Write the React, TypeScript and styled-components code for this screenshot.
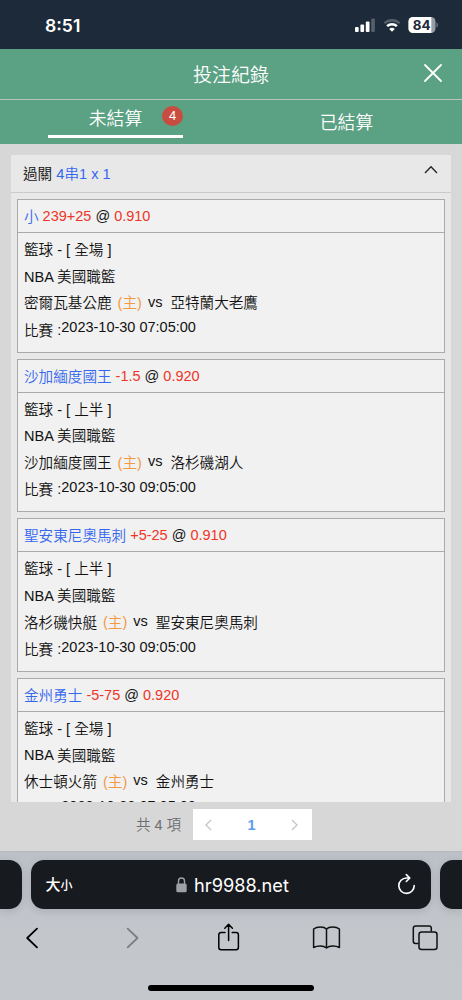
import React from 'react';
import styled, { createGlobalStyle } from 'styled-components';

const GlobalStyle = createGlobalStyle`
  * { box-sizing: border-box; }
  body { margin: 0; background: #d7d7d7; }
`;

const blue = '#3467ee';
const red = '#ee3528';
const orange = '#f29a43';
const sans = `"Liberation Sans", "Noto Sans CJK TC", sans-serif`;

const Screen = styled.div`
  width: 462px;
  height: 1000px;
  display: flex;
  flex-direction: column;
  overflow: hidden;
  background: #d7d7d7;
  font-family: ${sans};
  color: #111;
`;

const StatusBar = styled.div`
  height: 49px;
  flex: none;
  display: flex;
  justify-content: space-between;
  padding: 0 23px 0 45px;
  background: #1d2a3a;
  color: #fff;
`;

const Clock = styled.span`
  font: 600 17.6px/51px Inter, sans-serif;
`;

const StatusIcons = styled.div`
  display: flex;
  align-items: flex-start;
  gap: 7px;
  padding-top: 17px;
`;

const TitleBar = styled.header`
  height: 50.5px;
  flex: none;
  display: grid;
  grid-template-columns: 60px 1fr 60px;
  border-bottom: 1.5px solid #bbc4bf;
  background: #5ba183;
  color: #fff;
`;

const Title = styled.h1`
  grid-column: 2;
  margin: 0;
  text-align: center;
  font: 350 19px/50px "Noto Sans CJK TC", sans-serif;
`;

const CloseButton = styled.button`
  display: flex;
  padding: 14px 0 0 21px;
  border: 0;
  background: none;
`;

const Tabs = styled.nav`
  height: 44.5px;
  flex: none;
  display: grid;
  grid-template-columns: 1fr 1fr;
  justify-items: center;
  background: #5ba183;
  color: #fff;
  font: 350 17.8px/45px "Noto Sans CJK TC", sans-serif;
`;

const Tab = styled.div<{ $active?: boolean }>`
  position: relative;
  width: 135px;
  height: ${(p) => (p.$active ? 38.5 : 44.5)}px;
  border-bottom: ${(p) => (p.$active ? '3px solid #fff' : '0')};
  line-height: ${(p) => (p.$active ? 35 : 43)}px;
  text-align: center;
`;

const Badge = styled.span`
  position: absolute;
  top: 6px;
  right: 0;
  width: 21px;
  height: 20px;
  border-radius: 50%;
  background: #c94c40;
  font: 13px/20px ${sans};
  text-align: center;
`;

const Content = styled.main`
  height: 707px;
  flex: none;
  padding: 11px 11px 0;
`;

const Panel = styled.section`
  height: 647px;
  overflow: hidden;
  background: #e8e8e8;
`;

const PanelHeader = styled.div`
  height: 38px;
  display: flex;
  justify-content: space-between;
  padding: 0 13px 0 12px;
  border-bottom: 1px solid #cacaca;
  font-size: 14.6px;
  line-height: 36px;

  svg { margin-top: 10px; }
`;

const Bets = styled.div`
  display: flex;
  flex-direction: column;
  gap: 6px;
  padding: 6px 6px 0;
`;

const Card = styled.article`
  height: 153.6px;
  flex: none;
  border: 1px solid #aaa;
  background: #f1f1f1;
  font-size: 14.5px;
`;

const Selection = styled.div`
  height: 33px;
  display: flex;
  gap: 4px;
  padding-left: 6px;
  border-bottom: 1px solid #aaa;
  line-height: 33px;
`;

const Details = styled.div`
  padding: 4px 0 0 6px;
`;

const Line = styled.div`
  height: 26.6px;
  display: flex;
  line-height: 26.6px;
  white-space: pre;
`;

const Han = styled.span<{ $tone?: string }>`
  font-family: "Noto Sans CJK TC", sans-serif;
  font-weight: 350;
  font-size: 14.6px;
  color: ${(p) => p.$tone || 'inherit'};

  ${Selection} > & { margin-top: -1px; }
  ${Line} > & { margin-top: -0.8px; }
  ${Line}:last-child > & { margin-top: 0; }
`;

const Latin = styled.span<{ $tone?: string }>`
  color: ${(p) => p.$tone || 'inherit'};
`;

const HomeMark = styled.span`
  margin-left: 2px;
  color: ${orange};
`;

const Versus = styled.span`
  margin: -1.6px 8px 0 6px;
`;

const Time = styled.span`
  margin-top: -2.4px;
`;

const Pager = styled.div`
  display: flex;
  margin: 7px 0 0 125px;
  height: 31px;
  color: #6b6d70;
  line-height: 30px;
`;

const Total = styled.span`
  width: 57px;
  white-space: pre;
  font-size: 14.4px;
`;

const Pages = styled.div`
  width: 119px;
  display: flex;
  align-items: center;
  justify-content: space-between;
  padding: 0 14px 0 12px;
  background: #fff;
`;

const CurrentPage = styled.b`
  color: #5a9cf0;
  font-size: 14.5px;
`;

const Browser = styled.footer`
  height: 149px;
  flex: none;
  display: flex;
  flex-direction: column;
  border-top: 1px solid #b7babd;
  background: linear-gradient(#bcc1c7, #c3c6cb 55%, #c4c7cc);
`;

const AddressRow = styled.div`
  display: flex;
  gap: 9px;
  padding-top: 8.4px;
`;

const Neighbor = styled.div<{ $side: 'left' | 'right' }>`
  width: 22px;
  height: 49px;
  border-radius: ${(p) => (p.$side === 'left' ? '0 13px 13px 0' : '13px 0 0 13px')};
  background: #171a1e;
  box-shadow: 0 2px 9px rgba(0, 0, 0, 0.12);
`;

const Address = styled.div`
  width: 400px;
  height: 49px;
  display: grid;
  grid-template-columns: 60px 1fr 60px;
  border-radius: 13px;
  background: #171a1e;
  color: #fff;
  box-shadow: 0 2px 9px rgba(0, 0, 0, 0.12);
`;

const TextSize = styled.span`
  padding-left: 14.5px;
  font: 500 15px/48px "Noto Sans CJK TC", sans-serif;

  small { font-size: 12px; }
`;

const Domain = styled.span`
  display: flex;
  justify-content: center;
  gap: 7px;
  padding-left: 3px;
  font: 400 18.2px/50px Inter, sans-serif;

  svg { margin-top: 16.5px; }
`;

const Reload = styled.span`
  padding: 12.5px 0 0 26px;
`;

const Toolbar = styled.div`
  display: flex;
  justify-content: space-between;
  padding: 12.6px 22.5px 0 17px;
`;

const HomeIndicator = styled.div`
  width: 166px;
  height: 5.5px;
  margin: 31.5px auto 0;
  border-radius: 3px;
  background: #000;
`;

type Bet = { pick: string; line: string; odds: string; period: string; home: string; away: string; time: string };

const bets: Bet[] = [
  { pick: '小', line: '239+25', odds: '0.910', period: '全場', home: '密爾瓦基公鹿', away: '亞特蘭大老鷹', time: '2023-10-30 07:05:00' },
  { pick: '沙加緬度國王', line: '-1.5', odds: '0.920', period: '上半', home: '沙加緬度國王', away: '洛杉磯湖人', time: '2023-10-30 09:05:00' },
  { pick: '聖安東尼奧馬刺', line: '+5-25', odds: '0.910', period: '上半', home: '洛杉磯快艇', away: '聖安東尼奧馬刺', time: '2023-10-30 09:05:00' },
  { pick: '金州勇士', line: '-5-75', odds: '0.920', period: '全場', home: '休士頓火箭', away: '金州勇士', time: '2023-10-30 07:05:00' },
];

function BetCard({ bet }: { bet: Bet }) {
  return (
    <Card>
      <Selection>
        <Han $tone={blue}>{bet.pick}</Han>
        <Latin $tone={red}>{bet.line}</Latin>
        <Latin>@</Latin>
        <Latin $tone={red}>{bet.odds}</Latin>
      </Selection>
      <Details>
        <Line><Han>籃球</Han><Latin>{' - [ '}</Latin><Han>{bet.period}</Han><Latin>{' ]'}</Latin></Line>
        <Line><Latin>{'NBA '}</Latin><Han>美國職籃</Han></Line>
        <Line>
          <Han>{bet.home}</Han>
          <HomeMark>{' ('}</HomeMark><Han $tone={orange}>主</Han><Latin $tone={orange}>)</Latin>
          <Versus>vs</Versus>
          <Han>{bet.away}</Han>
        </Line>
        <Line><Han>比賽</Han><Latin>{' :'}</Latin><Time>{bet.time}</Time></Line>
      </Details>
    </Card>
  );
}

function Chevron({ color, right }: { color: string; right?: boolean }) {
  return (
    <svg width="30" height="32" viewBox="0 0 30 32" fill="none" stroke={color} strokeWidth="1.8" strokeLinecap="round" strokeLinejoin="round">
      <path d={right ? 'M12.7 6.7 22.5 16l-9.8 9.3' : 'M20 6.7 10.2 16 20 25.3'} />
    </svg>
  );
}

export default function App() {
  return (
    <Screen>
      <GlobalStyle />
      <StatusBar>
        <Clock>8:51</Clock>
        <StatusIcons>
          <svg width="22" height="16" viewBox="0 0 22 16" fill="#fff">
            <rect x="1" y="10" width="3.7" height="5" rx="1" />
            <rect x="6.4" y="7.5" width="3.7" height="7.5" rx="1" />
            <rect x="11.8" y="4.5" width="3.7" height="10.5" rx="1" />
            <rect x="17.2" y="1.5" width="3.7" height="13.5" rx="1" opacity=".25" />
          </svg>
          <svg width="18" height="16" viewBox="0 0 18 16" fill="none" stroke="#fff">
            <path d="M1.5 6.2a10.8 10.8 0 0 1 15 0" strokeWidth="2.5" opacity=".25" />
            <path d="M4.1 9.2a7.1 7.1 0 0 1 9.8 0" strokeWidth="2.5" />
            <path d="M9 14.8 6.2 12a4 4 0 0 1 5.6 0z" fill="#fff" stroke="none" />
          </svg>
          <svg width="31" height="16" viewBox="0 0 31 16">
            <defs><clipPath id="battery"><rect x="0.5" y="0" width="27" height="16" rx="4.5" /></clipPath></defs>
            <g clipPath="url(#battery)">
              <rect width="28" height="16" fill="#979da4" />
              <rect width="23.3" height="16" fill="#fff" />
            </g>
            <path d="M28.5 5.5c1.8.6 1.8 4.4 0 5z" fill="#78818b" />
            <text x="13.7" y="12.9" textAnchor="middle" fontFamily="Inter" fontWeight="700" fontSize="13.4" fill="#1d2a3a">84</text>
          </svg>
        </StatusIcons>
      </StatusBar>

      <TitleBar>
        <Title>投注紀錄</Title>
        <CloseButton aria-label="關閉">
          <svg width="20" height="20" viewBox="0 0 20 20" stroke="#fff" strokeWidth="1.8" strokeLinecap="round">
            <path d="m2 2 16 16M18 2 2 18" />
          </svg>
        </CloseButton>
      </TitleBar>
      <Tabs>
        <Tab $active>未結算<Badge>4</Badge></Tab>
        <Tab>已結算</Tab>
      </Tabs>

      <Content>
        <Panel>
          <PanelHeader>
            <span><Han>過關</Han><Latin $tone={blue}>{' 4'}<Han>串</Han>1 x 1</Latin></span>
            <svg width="14" height="10" viewBox="0 0 14 10" fill="none" stroke="#222" strokeWidth="1.3">
              <path d="M1 8 7 1.8 13 8" />
            </svg>
          </PanelHeader>
          <Bets>{bets.map((bet) => <BetCard key={bet.pick} bet={bet} />)}</Bets>
        </Panel>
        <Pager>
          <Total><Han>共</Han> 4 <Han>項</Han></Total>
          <Pages>
            <svg width="7" height="12" viewBox="0 0 7 12" fill="none" stroke="#c0c4cc" strokeWidth="1.3"><path d="M6 1 1 6l5 5" /></svg>
            <CurrentPage>1</CurrentPage>
            <svg width="7" height="12" viewBox="0 0 7 12" fill="none" stroke="#c0c4cc" strokeWidth="1.3"><path d="m1 1 5 5-5 5" /></svg>
          </Pages>
        </Pager>
      </Content>

      <Browser>
        <AddressRow>
          <Neighbor $side="left" />
          <Address>
            <TextSize>大<small>小</small></TextSize>
            <Domain>
              <svg width="11" height="16" viewBox="0 0 11 16">
                <rect x="0.3" y="6.5" width="10.4" height="8.7" rx="1.5" fill="#a0a1a5" />
                <path d="M2.5 7V4a3 3 0 0 1 6 0v3" fill="none" stroke="#a0a1a5" strokeWidth="1.4" />
              </svg>
              hr9988.net
            </Domain>
            <Reload>
              <svg width="19" height="23" viewBox="0 0 19 23" fill="none" stroke="#fff" strokeWidth="1.6" strokeLinecap="round" strokeLinejoin="round">
                <path d="M17.2 12.5A7.7 7.7 0 1 1 9.5 5h3M9.3 1.6 12.8 5 9.3 8.5" />
              </svg>
            </Reload>
          </Address>
          <Neighbor $side="right" />
        </AddressRow>
        <Toolbar>
          <Chevron color="#000" />
          <Chevron color="#7b7d81" right />
          <svg width="30" height="32" viewBox="0 0 30 32" fill="none" stroke="#000" strokeWidth="1.5" strokeLinecap="round" strokeLinejoin="round">
            <path d="M12 10.5H8a2.2 2.2 0 0 0-2.2 2.2v12.9A2.2 2.2 0 0 0 8 27.8h15.2a2.2 2.2 0 0 0 2.2-2.2V12.7a2.2 2.2 0 0 0-2.2-2.2h-4M15.6 18.5v-16M11.8 6.2l3.8-3.9 3.8 3.9" />
          </svg>
          <svg width="30" height="32" viewBox="0 0 30 32" fill="none" stroke="#111" strokeWidth="1.5" strokeLinejoin="round">
            <path d="M15.5 7C13 4.3 6 4.3 2.6 7v18.5c4-2 9.9-2 12.9.5 3-2.5 8.9-2.5 12.9-.5V7C25 4.3 18 4.3 15.5 7zM15.5 7v19" />
          </svg>
          <svg width="30" height="32" viewBox="0 0 30 32" fill="none" stroke="#111" strokeWidth="1.5" strokeLinejoin="round">
            <path d="M8.5 21.5h-3a2.2 2.2 0 0 1-2.2-2.2V6.2A2.2 2.2 0 0 1 5.5 4h13.6a2.2 2.2 0 0 1 2.2 2.2v3.3" />
            <rect x="9" y="10" width="18" height="17.5" rx="2.5" />
          </svg>
        </Toolbar>
        <HomeIndicator />
      </Browser>
    </Screen>
  );
}
